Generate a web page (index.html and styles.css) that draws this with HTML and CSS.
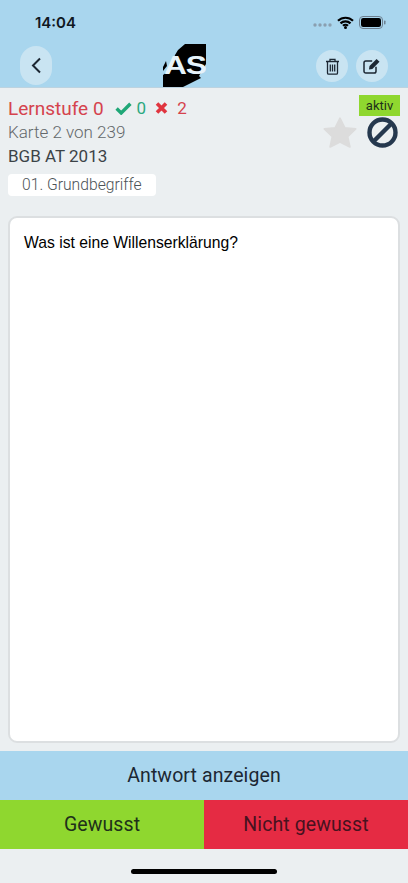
FILE: index.html
```html
<!DOCTYPE html>
<html lang="de">
<head>
<meta charset="utf-8">
<title>Lernkarte</title>
<link rel="stylesheet" href="styles.css">
</head>
<body>
<div class="app">
  <header class="header">
    <div class="status">
      <span class="time">14:04</span>
      <div class="status-icons">
        <svg class="dots" width="19" height="4" viewBox="0 0 19 4"><g fill="#8a9fb0"><circle cx="2" cy="2" r="1.7"/><circle cx="7" cy="2" r="1.7"/><circle cx="12" cy="2" r="1.7"/><circle cx="17" cy="2" r="1.7"/></g></svg>
        <svg class="wifi" width="17" height="13" viewBox="0 0 17 13"><path d="M1 4.800a10.800 10.800 0 0 1 15 0M3.500 7.400a7.200 7.200 0 0 1 10 0M6 9.800a3.600 3.600 0 0 1 5 0" fill="none" stroke="#000" stroke-width="2.200"/><circle cx="8.500" cy="11.500" r="1.500"/></svg>
        <svg width="27" height="13" viewBox="0 0 27 13"><rect x=".5" y=".5" width="23" height="12" rx="3.500" fill="none" stroke="#6d8090"/><rect x="2" y="2" width="20" height="9" rx="2.200"/><rect x="25" y="4.500" width="1.500" height="4" rx=".7" fill="#6d8090"/></svg>
      </div>
    </div>
    <nav class="nav">
      <button class="back" aria-label="Zurück">
        <svg width="11" height="17" viewBox="0 0 11 17"><path d="M9 1.500 2 8.500l7 7" fill="none" stroke="#1c2733" stroke-width="2"/></svg>
      </button>
      <div class="logo">
        <svg class="logo-shape" width="43" height="43" viewBox="0 0 43 43"><path d="M15 6 22 0h21v20L36 32l2 2-18 9H0V31l8-6 4-14zM0 27v-4l3-6 1 5z" fill="#000"/></svg>
        <span class="logo-text">AS</span>
      </div>
      <div class="actions">
        <button class="round" aria-label="Löschen">
          <svg width="15" height="17" viewBox="0 0 15 17"><path d="M1 3.500h13M5 3V1.300h5V3M2.500 4v11a1.200 1.200 0 0 0 1.200 1.200h7.600a1.200 1.200 0 0 0 1.200-1.200V4M5.300 6.500v7M7.500 6.500v7M9.700 6.500v7" fill="none" stroke="#1c2733" stroke-width="1.300"/></svg>
        </button>
        <button class="round" aria-label="Bearbeiten">
          <svg width="18" height="16" viewBox="0 0 18 16"><path d="M13 8.800v4.400a1.800 1.800 0 0 1-1.800 1.800H2.800A1.800 1.800 0 0 1 1 13.200V4.800A1.800 1.800 0 0 1 2.800 3h6.400" fill="none" stroke="#1c2733" stroke-width="1.500"/><path d="M6.500 8 13.600 1l2.900 2.800-7.100 7.100-3.400.6z" fill="#1c2733"/></svg>
        </button>
      </div>
    </nav>
  </header>

  <section class="info">
    <div class="info-text">
      <div class="level-row">
        <span class="level">Lernstufe 0</span>
        <svg class="ico-check" width="17" height="13" viewBox="0 0 17 13"><path d="M1.600 6.500 6.200 11 15.400 1.800" fill="none" stroke="#1fa777" stroke-width="3.400"/></svg>
        <span class="right">0</span>
        <svg class="ico-x" width="13" height="12" viewBox="0 0 13 12"><path d="M2 1.500l9 9M11 1.500l-9 9" fill="none" stroke="#e0353f" stroke-width="3.600"/></svg>
        <span class="wrong">2</span>
      </div>
      <div class="count">Karte 2 von 239</div>
      <div class="deck">BGB AT 2013</div>
      <div class="tag">01. Grundbegriffe</div>
    </div>
    <div class="info-side">
      <span class="badge">aktiv</span>
      <div class="side-icons">
        <svg width="34" height="33" viewBox="0 0 36 33"><path d="M18 1.500l5 10.100 11.500 1.100-8.500 8.200 2.400 10.800L18 26.500 7.600 31.700 10 20.900 1.500 12.700 13 11.600z" fill="#dcdcdc" stroke="#dcdcdc" stroke-width="2" stroke-linejoin="round"/></svg>
        <svg width="31" height="31" viewBox="0 0 31 31"><circle cx="15.500" cy="15.500" r="13" fill="none" stroke="#25384e" stroke-width="4.400"/><path d="M6.500 24.500l18-18" stroke="#25384e" stroke-width="4.400"/></svg>
      </div>
    </div>
  </section>

  <main class="card">Was ist eine Willenserklärung?</main>

  <button class="reveal">Antwort anzeigen</button>
  <div class="answers">
    <button class="known">Gewusst</button>
    <button class="unknown">Nicht gewusst</button>
  </div>
  <div class="home-area"><span class="home-bar"></span></div>
</div>
</body>
</html>
```

FILE: styles.css
```css
* { box-sizing: border-box; }
html, body { margin: 0; padding: 0; }
body { background: #ebeff1; font-family: Roboto, sans-serif; color: #1c2733; }
button { border: 0; padding: 0; margin: 0; font: inherit; color: inherit; cursor: pointer; }

.app { width: 408px; height: 883px; display: flex; flex-direction: column; overflow: hidden; }

.header { height: 88px; background: #a9d6ee; border-bottom: 1px solid #bcd3e0; flex: none; }
.status { height: 44px; display: flex; justify-content: space-between; align-items: center; padding: 0 22px 0 35px; }
.time { font-family: Inter, sans-serif; font-size: 15px; font-weight: 600; color: #10181f; }
.status-icons { display: flex; align-items: center; gap: 5px; }
.dots { position: relative; top: 3px; }

.nav { height: 43px; display: flex; align-items: flex-start; justify-content: space-between; padding: 2px 20px 0 20px; position: relative; }
.back { width: 32px; height: 39px; border-radius: 16px; background: #c9e4f2; display: flex; align-items: center; justify-content: center; }
.actions { display: flex; gap: 8px; margin-top: 4px; }
.round { width: 32px; height: 32px; border-radius: 50%; background: #c9e4f2; display: flex; align-items: center; justify-content: center; }

.logo { position: absolute; left: 163px; top: 0; width: 43px; height: 43px; overflow: hidden; }
.logo-shape { display: block; }
.logo-text { position: absolute; left: 1px; top: 6px; font-family: "Liberation Sans", sans-serif; font-weight: 700; font-size: 26px; line-height: 30px; letter-spacing: -1px; color: #e6f3fa; transform: scaleX(1.220); transform-origin: left center; }

.info { height: 128px; display: flex; justify-content: space-between; padding: 8px 8px 0 8px; flex: none; }
.level-row { display: flex; align-items: center; height: 24px; }
.level { font-size: 19px; color: #d5434d; margin-right: 11px; }
.ico-check { margin-right: 5px; }
.right { font-size: 17px; color: #2aa87f; margin-right: 9px; }
.ico-x { margin-right: 9px; }
.wrong { font-size: 17px; color: #d5434d; }
.count { font-size: 17px; line-height: 24px; color: #63686b; font-weight: 300; }
.deck { font-size: 17px; line-height: 24px; color: #3c4347; }
.tag { width: 148px; height: 22px; line-height: 22px; margin-top: 6px; padding-left: 14px; background: #fff; border-radius: 4px; font-size: 15.700px; font-weight: 300; color: #4c5357; }

.info-side { display: flex; flex-direction: column; align-items: flex-end; margin-top: -1px; }
.badge { width: 41px; height: 21px; line-height: 21px; text-align: center; background: #8fd72f; font-size: 13px; color: #20301a; }
.side-icons { display: flex; align-items: center; gap: 10px; margin-right: 2px; }

.card { height: 527px; margin: 0 8px; flex: none; background: #fff; border: 2px solid #dcdfe1; border-radius: 9px; padding: 14px; font-family: "Liberation Sans", sans-serif; font-size: 15.700px; line-height: 22px; color: #000; }

.reveal { height: 49px; margin-top: 8px; flex: none; background: #a9d6ee; font-size: 19.500px; letter-spacing: .1px; color: #1c2733; text-align: center; }
.answers { display: flex; height: 49px; flex: none; }
.known, .unknown { width: 50%; font-size: 19.500px; letter-spacing: .1px; }
.known { background: #8fd72f; color: #20301a; }
.unknown { background: #e52b43; color: #47121f; }
.home-area { flex: 1; display: flex; justify-content: center; align-items: flex-start; padding-top: 20px; }
.home-bar { width: 146px; height: 5px; border-radius: 3px; background: #000; }
```
